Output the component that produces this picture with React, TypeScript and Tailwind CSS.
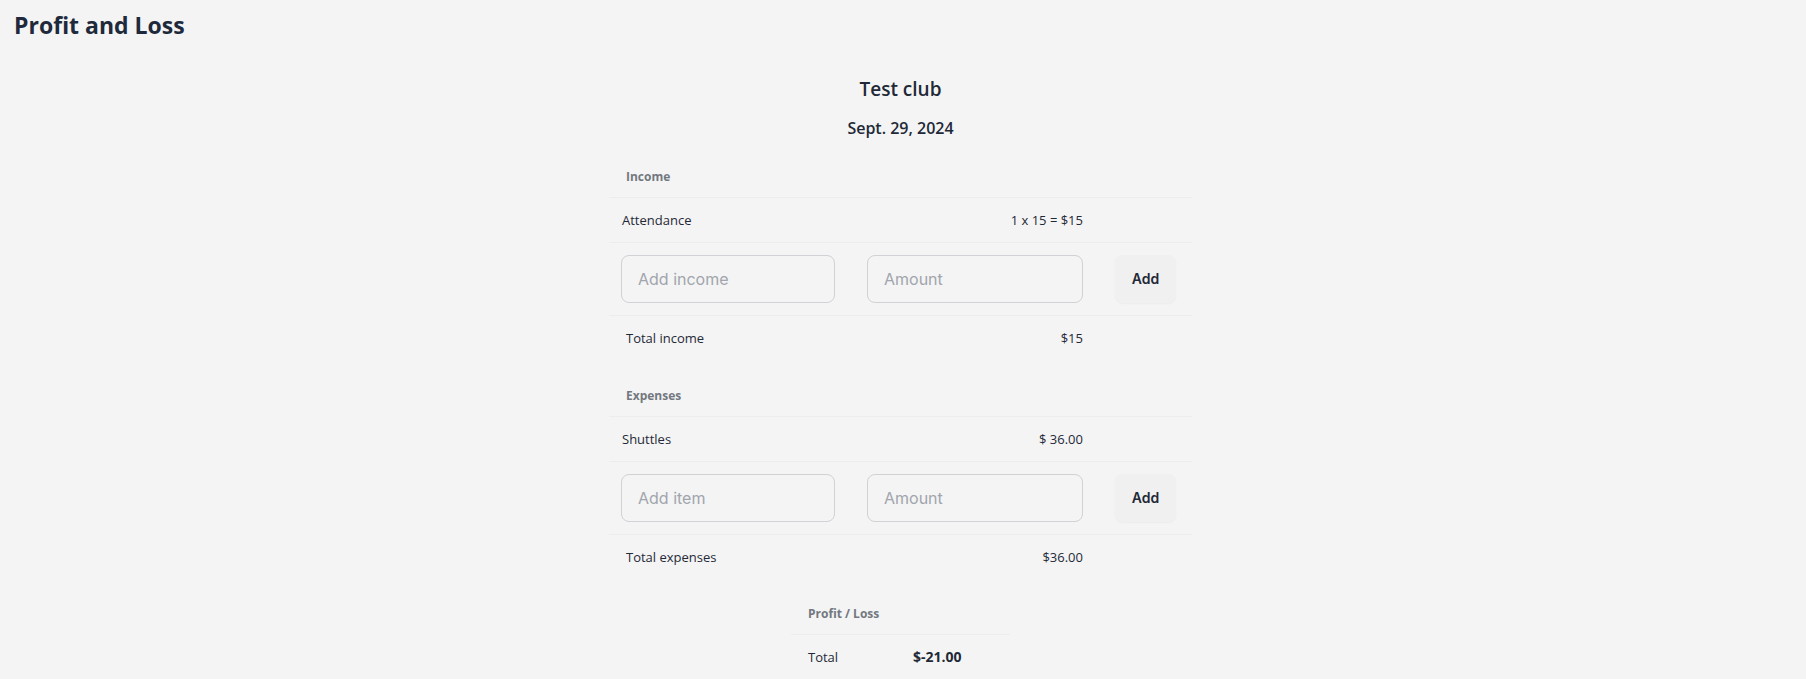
const body = { fontFamily: '"Segoe UI", "Open Sans", sans-serif' };
const inter = { fontFamily: 'Inter, "Open Sans", sans-serif' };

const Header = ({ label }: { label: string }) => (
  <thead>
    <tr className="border-b border-[#ededed]">
      <th colSpan={3} className="pl-[17px] py-3 text-left text-[12px] leading-4 font-bold text-[#737880]">
        {label}
      </th>
    </tr>
  </thead>
);

const ItemRow = ({ name, value }: { name: string; value: string }) => (
  <tr className="border-b border-[#ededed]">
    <td className="pl-[13px] pr-4 py-3 text-[13px] leading-5">{name}</td>
    <td className="px-4 py-3 text-right text-[13px] leading-5">{value}</td>
    <td />
  </tr>
);

const AddRow = ({ placeholder }: { placeholder: string }) => (
  <tr className="border-b border-[#ededed]">
    <td className="pl-3 pr-4 py-3">
      <input
        style={inter}
        placeholder={placeholder}
        className="w-full h-12 px-4 rounded-lg border border-[#d1d1d6] bg-transparent text-base placeholder:text-[#a1a5ad] outline-none"
      />
    </td>
    <td className="px-4 py-3">
      <input
        style={inter}
        placeholder="Amount"
        className="w-full h-12 px-4 rounded-lg border border-[#d1d1d6] bg-transparent text-base placeholder:text-[#a1a5ad] outline-none"
      />
    </td>
    <td className="pl-4 pr-4 py-3">
      <button
        style={inter}
        className="w-[61px] h-12 rounded-lg bg-[#f0f0f0] shadow-[0_1px_2px_rgba(0,0,0,0.04)] text-sm font-semibold text-[#1f2937]"
      >
        Add
      </button>
    </td>
  </tr>
);

const TotalRow = ({ name, value }: { name: string; value: string }) => (
  <tr>
    <td className="pl-[17px] pr-4 py-3 text-[13px] leading-5">{name}</td>
    <td className="px-4 py-3 text-right text-[13px] leading-5">{value}</td>
    <td />
  </tr>
);

const Cols = () => (
  <colgroup>
    <col className="w-[242px]" />
    <col className="w-[248px]" />
    <col className="w-[93px]" />
  </colgroup>
);

export default function App() {
  return (
    <div style={body} className="min-h-screen bg-[#f4f4f4] text-[#1f2937]">
      <h1 className="pl-[14px] pt-[9px] text-[23px] leading-8 font-bold text-[#1e293b]">Profit and Loss</h1>
      <div className="flex justify-center pr-[5px]">
        <div className="w-[583px]">
          <h2 className="mt-[34px] text-center text-[19px] leading-7 font-semibold">Test club</h2>
          <h3 className="mt-[13px] text-center text-base leading-6 font-semibold">Sept. 29, 2024</h3>

          <table className="mt-[17px] w-full table-fixed border-collapse">
            <Cols />
            <Header label="Income" />
            <tbody>
              <ItemRow name="Attendance" value="1 x 15 = $15" />
              <AddRow placeholder="Add income" />
              <TotalRow name="Total income" value="$15" />
            </tbody>
          </table>

          <table className="mt-[16px] w-full table-fixed border-collapse">
            <Cols />
            <Header label="Expenses" />
            <tbody>
              <ItemRow name="Shuttles" value="$ 36.00" />
              <AddRow placeholder="Add item" />
              <TotalRow name="Total expenses" value="$36.00" />
            </tbody>
          </table>

          <table className="mx-auto mt-[15px] w-[219px] table-fixed border-collapse">
            <colgroup>
              <col className="w-[106px]" />
              <col className="w-[113px]" />
            </colgroup>
            <thead>
              <tr className="border-b border-[#ededed]">
                <th colSpan={2} className="pl-[17px] py-3 text-left text-[12px] leading-4 font-bold text-[#737880]">
                  Profit / Loss
                </th>
              </tr>
            </thead>
            <tbody>
              <tr>
                <td className="pl-[17px] pr-4 py-3 text-[13px] leading-5">Total</td>
                <td className="px-4 py-3 text-sm leading-5 font-bold">$-21.00</td>
              </tr>
            </tbody>
          </table>
        </div>
      </div>
    </div>
  );
}
